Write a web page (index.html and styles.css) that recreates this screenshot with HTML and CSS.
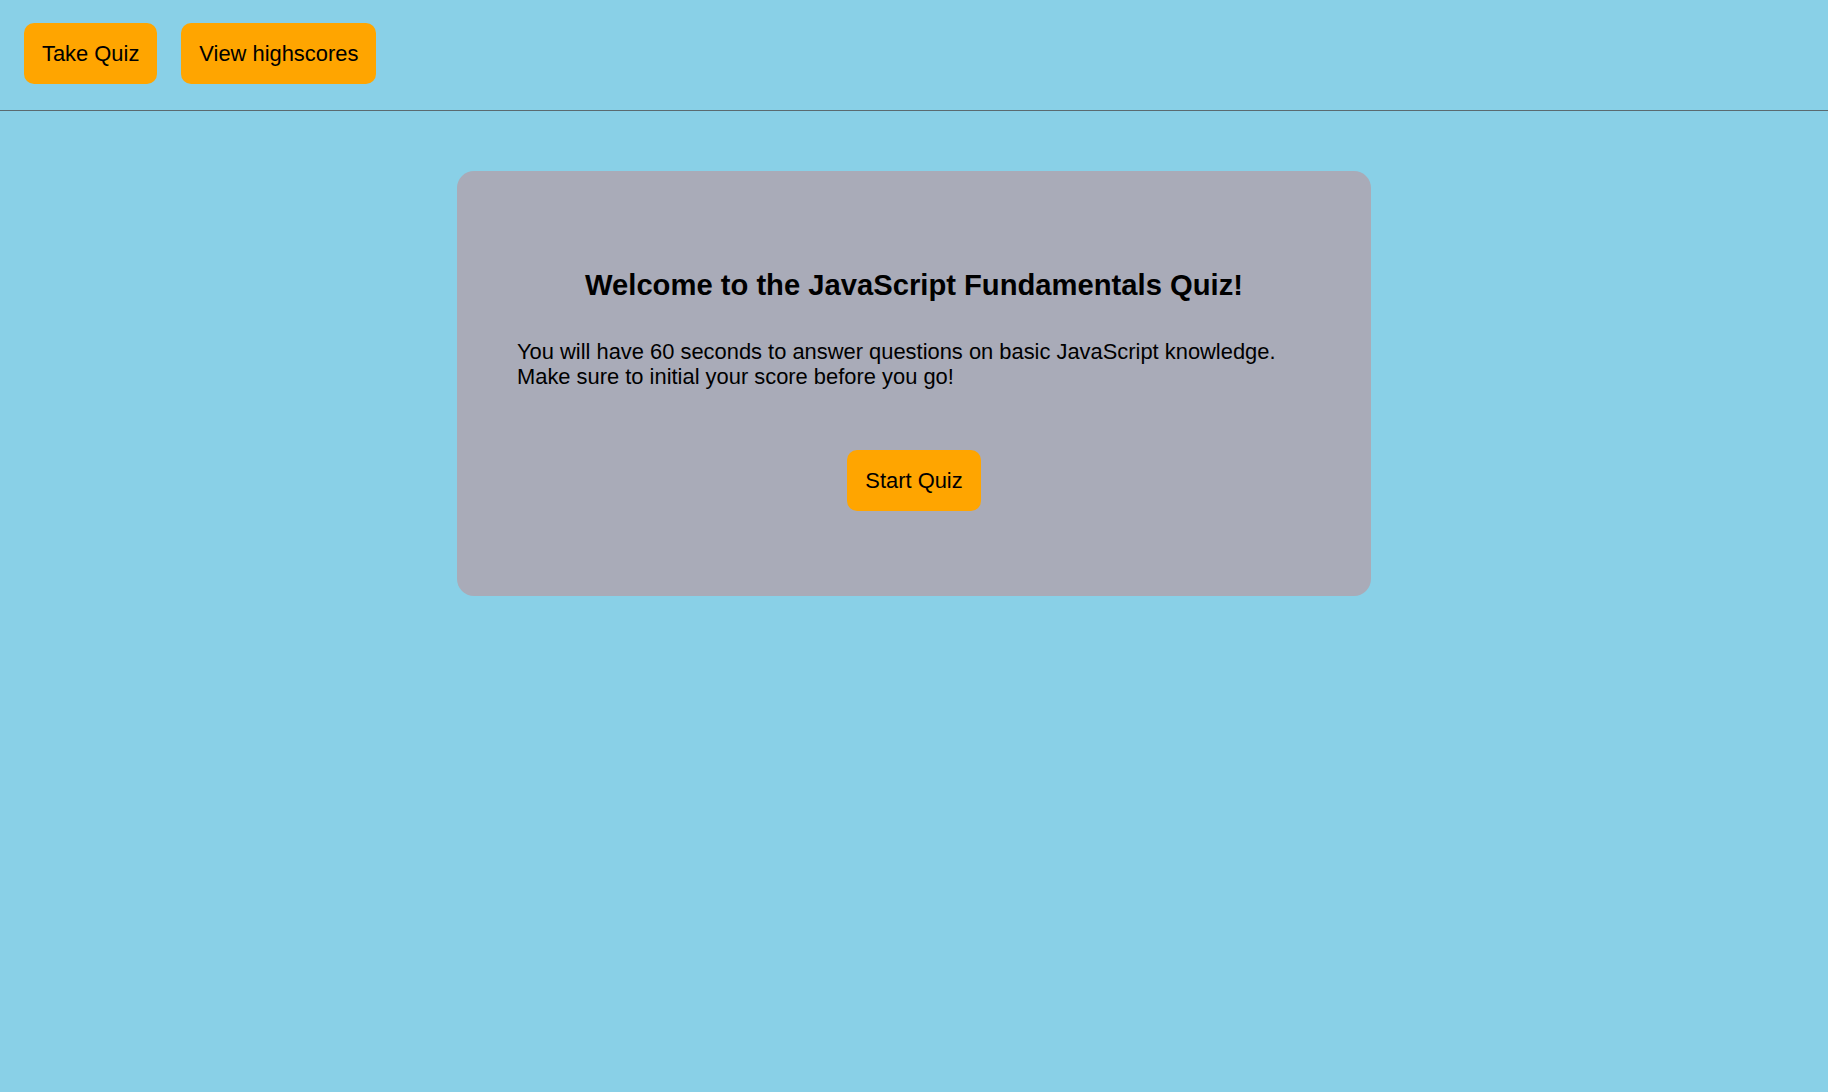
FILE: index.html
```html
<!DOCTYPE html>
<html lang="en">
<head>
<meta charset="utf-8">
<title>JavaScript Fundamentals Quiz</title>
<link rel="stylesheet" href="styles.css">
</head>
<body>
<header class="topbar">
  <button class="btn">Take Quiz</button>
  <button class="btn">View highscores</button>
</header>
<main class="main">
  <section class="card">
    <h2 class="title">Welcome to the JavaScript Fundamentals Quiz!</h2>
    <p class="intro">You will have 60 seconds to answer questions on basic JavaScript knowledge.<br>Make sure to initial your score before you go!</p>
    <div class="actions">
      <button class="btn">Start Quiz</button>
    </div>
  </section>
</main>
</body>
</html>
```
FILE: styles.css
```css
html, body {
  margin: 0;
  padding: 0;
}
body {
  background: #89d0e7;
  font-family: "Liberation Sans", Arial, sans-serif;
  color: #000;
  min-height: 1092px;
}
.topbar {
  display: flex;
  gap: 24px;
  padding: 23px 24px 26px;
  border-bottom: 1px solid #5a6a70;
}
.btn {
  background: #ffa500;
  border: none;
  border-radius: 10px;
  font-family: "Liberation Sans", Arial, sans-serif;
  font-size: 21.9px;
  line-height: 25px;
  padding: 18px 18px;
  color: #000;
  cursor: pointer;
}
.main {
  padding-top: 60px;
}
.card {
  width: 914px;
  margin: 0 auto;
  box-sizing: border-box;
  background: #a9abb8;
  border-radius: 17px;
  padding: 98px 60px 85px;
}
.title {
  margin: 0;
  text-align: center;
  font-size: 29.2px;
  line-height: 32px;
  font-weight: bold;
}
.intro {
  margin: 38px 0 0;
  font-size: 21.9px;
  line-height: 25px;
}
.actions {
  display: flex;
  justify-content: center;
  margin-top: 61px;
}
```
